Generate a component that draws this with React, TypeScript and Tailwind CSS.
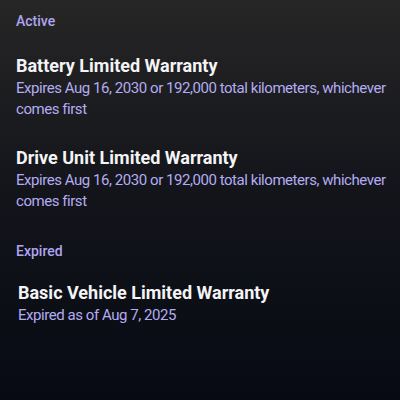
import React from "react";

type Warranty = {
  name: string;
  detail: string;
};

const ACTIVE: Warranty[] = [
  {
    name: "Battery Limited Warranty",
    detail: "Expires Aug 16, 2030 or 192,000 total kilometers, whichever comes first",
  },
  {
    name: "Drive Unit Limited Warranty",
    detail: "Expires Aug 16, 2030 or 192,000 total kilometers, whichever comes first",
  },
];

const EXPIRED: Warranty[] = [
  {
    name: "Basic Vehicle Limited Warranty",
    detail: "Expired as of Aug 7, 2025",
  },
];

function WarrantyItem({ item }: { item: Warranty }) {
  return (
    <div>
      <h3 className="text-[18px] leading-[24px] font-bold text-[#f4f4f6]">
        {item.name}
      </h3>
      <p className="text-[15px] leading-[21px] tracking-[-0.45px] text-[#b3acf2]">
        {item.detail}
      </p>
    </div>
  );
}

export default function App() {
  return (
    <div
      className="w-[400px] h-[400px] overflow-hidden bg-gradient-to-b from-[#262626] via-[#13141a] to-[#070a13] pl-4 pt-[11px]"
      style={{ fontFamily: "Roboto, 'Noto Sans', sans-serif" }}
    >
      <p className="text-[14px] leading-[20px] font-medium text-[#aea6f0]">Active</p>
      <div className="mt-[23px] flex flex-col gap-[26px]">
        {ACTIVE.map((w) => (
          <WarrantyItem key={w.name} item={w} />
        ))}
      </div>

      <p className="mt-[29px] text-[14px] leading-[20px] font-medium text-[#aea6f0]">Expired</p>
      <div className="mt-[20px] pl-[2px]">
        {EXPIRED.map((w) => (
          <WarrantyItem key={w.name} item={w} />
        ))}
      </div>
    </div>
  );
}
